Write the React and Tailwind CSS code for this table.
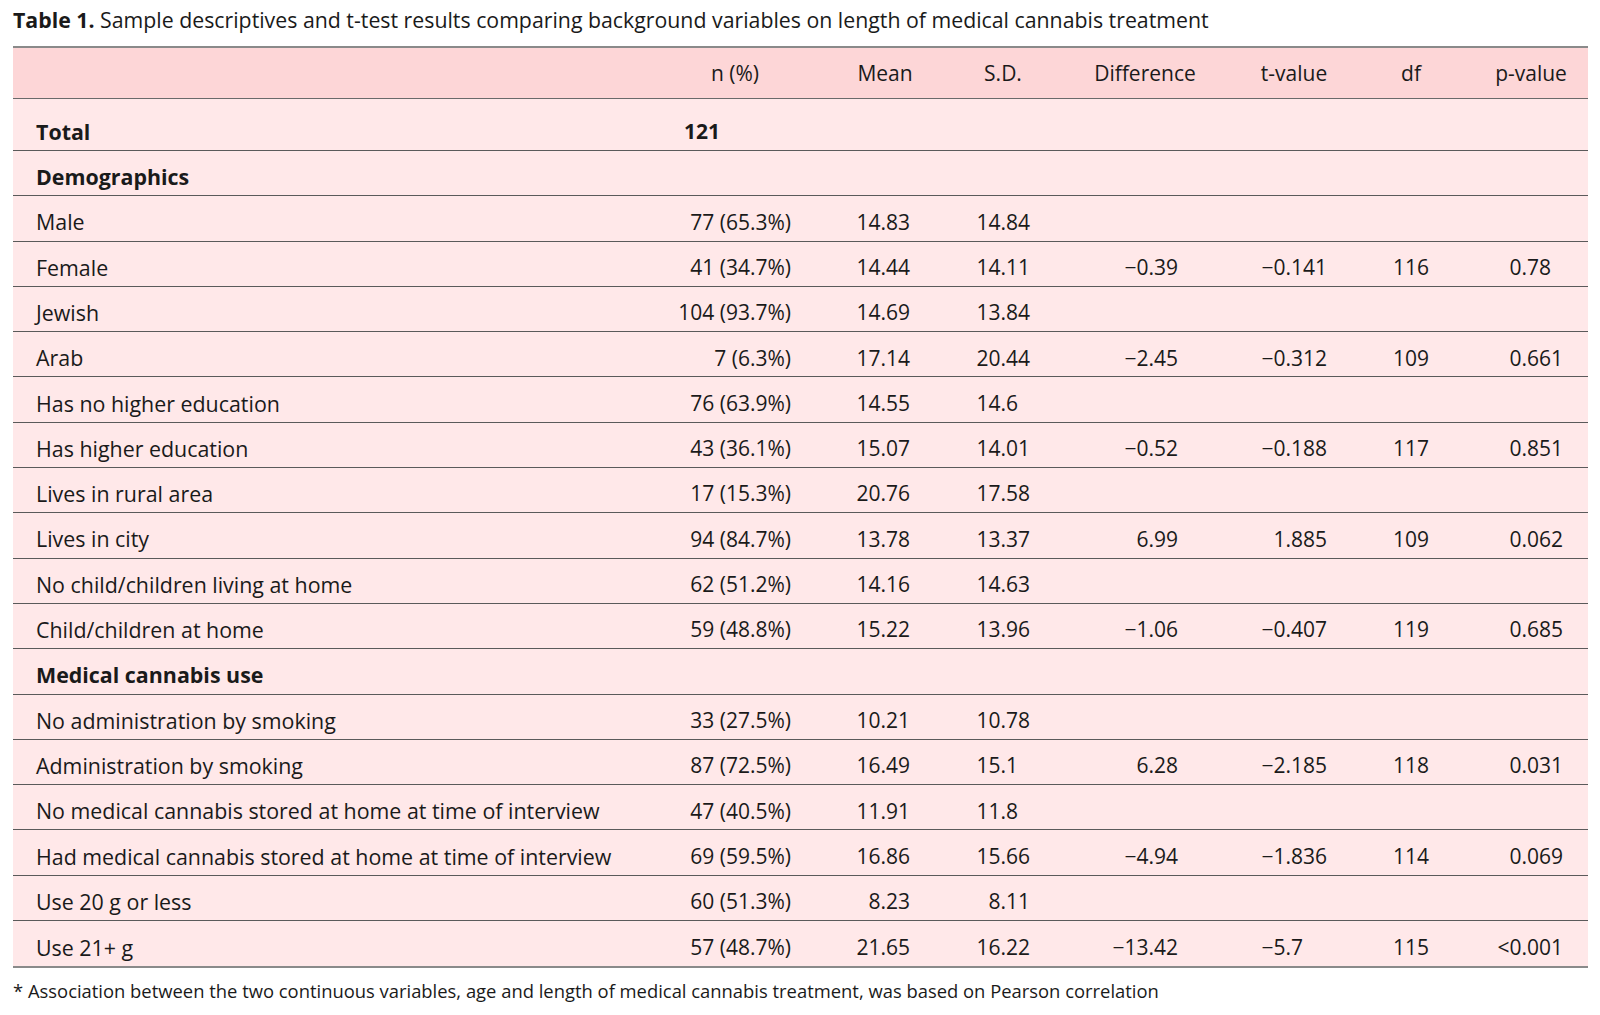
const rows = [
  { section: "Demographics" },
  { label: "Male", n: "77 (65.3%)", mean: "14.83", sd: "14.84" },
  { label: "Female", n: "41 (34.7%)", mean: "14.44", sd: "14.11", diff: "−0.39", t: "−0.141", df: "116", p: "0.78" },
  { label: "Jewish", n: "104 (93.7%)", mean: "14.69", sd: "13.84" },
  { label: "Arab", n: "7 (6.3%)", mean: "17.14", sd: "20.44", diff: "−2.45", t: "−0.312", df: "109", p: "0.661" },
  { label: "Has no higher education", n: "76 (63.9%)", mean: "14.55", sd: "14.6" },
  { label: "Has higher education", n: "43 (36.1%)", mean: "15.07", sd: "14.01", diff: "−0.52", t: "−0.188", df: "117", p: "0.851" },
  { label: "Lives in rural area", n: "17 (15.3%)", mean: "20.76", sd: "17.58" },
  { label: "Lives in city", n: "94 (84.7%)", mean: "13.78", sd: "13.37", diff: "6.99", t: "1.885", df: "109", p: "0.062" },
  { label: "No child/children living at home", n: "62 (51.2%)", mean: "14.16", sd: "14.63" },
  { label: "Child/children at home", n: "59 (48.8%)", mean: "15.22", sd: "13.96", diff: "−1.06", t: "−0.407", df: "119", p: "0.685" },
  { section: "Medical cannabis use" },
  { label: "No administration by smoking", n: "33 (27.5%)", mean: "10.21", sd: "10.78" },
  { label: "Administration by smoking", n: "87 (72.5%)", mean: "16.49", sd: "15.1", diff: "6.28", t: "−2.185", df: "118", p: "0.031" },
  { label: "No medical cannabis stored at home at time of interview", n: "47 (40.5%)", mean: "11.91", sd: "11.8" },
  { label: "Had medical cannabis stored at home at time of interview", n: "69 (59.5%)", mean: "16.86", sd: "15.66", diff: "−4.94", t: "−1.836", df: "114", p: "0.069" },
  { label: "Use 20 g or less", n: "60 (51.3%)", mean: "8.23", sd: "8.11" },
  { label: "Use 21+ g", n: "57 (48.7%)", mean: "21.65", sd: "16.22", diff: "−13.42", t: "−5.7", df: "115", p: "<0.001" },
];

const cols = "grid grid-cols-[627px_190px_110px_126px_158px_140px_94px_130px] items-center";

// right-aligned number, padded with invisible zeros so decimal points line up
const Dec = ({ v, places }) => {
  if (!v) return null;
  const have = v.includes(".") ? v.split(".")[1].length : 0;
  const pad = "0".repeat(Math.max(0, places - have));
  return (
    <span>
      {v}
      {pad && <span className="invisible">{pad}</span>}
    </span>
  );
};

const App = () => {
  return (
    <div className="w-[1600px] h-[1015px] bg-white pl-[13px] pt-[8px] text-[#1a1a1a] font-['Open_Sans','Noto_Sans',sans-serif] tabular-nums">
      <div className="text-[21.3px] leading-[24px] whitespace-nowrap">
        <span className="font-bold">Table 1.</span> Sample descriptives and t-test results comparing background variables on length of medical cannabis treatment
      </div>

      <div className="mt-[14px] w-[1575px] border-t-2 border-b-2 border-[#8a8a8a] text-[21px]">
        {/* header */}
        <div className={`${cols} h-[51px] pt-[2px] bg-[#fdd6d7] border-b border-[#6a6a6a]`}>
          <div></div>
          <div className="text-center">n (%)</div>
          <div className="text-center">Mean</div>
          <div className="text-center">S.D.</div>
          <div className="text-center">Difference</div>
          <div className="text-center">t-value</div>
          <div className="text-center">df</div>
          <div className="text-center pl-[16px]">p-value</div>
        </div>

        {/* total */}
        <div className={`${cols} h-[52px] pt-[15px] bg-[#ffe8e9] border-b border-[#5a5a5a] font-bold`}>
          <div className="pl-[23px] text-[21.4px]">Total</div>
          <div className="pl-[44px]">121</div>
        </div>

        {rows.map((r, i) =>
          r.section ? (
            <div key={i} className={`${cols} h-[45.3px] pt-[8px] bg-[#ffe8e9] border-b border-[#5a5a5a] font-bold`}>
              <div className="pl-[23px] text-[21.4px]">{r.section}</div>
            </div>
          ) : (
            <div
              key={i}
              className={`${cols} h-[45.3px] pt-[8px] bg-[#ffe8e9] ${i === rows.length - 1 ? "" : "border-b border-[#5a5a5a]"}`}
            >
              <div className="pl-[23px] text-[21.4px] whitespace-nowrap">{r.label}</div>
              <div className="text-right pr-[39px] whitespace-nowrap">{r.n}</div>
              <div className="text-right pr-[30px]"><Dec v={r.mean} places={2} /></div>
              <div className="text-right pr-[36px]"><Dec v={r.sd} places={2} /></div>
              <div className="text-right pr-[46px]"><Dec v={r.diff} places={2} /></div>
              <div className="text-right pr-[37px]"><Dec v={r.t} places={3} /></div>
              <div className="text-center">{r.df}</div>
              <div className="text-right pr-[25px]"><Dec v={r.p} places={3} /></div>
            </div>
          )
        )}
      </div>

      <div className="mt-[11px] text-[18.4px] leading-[24px] whitespace-nowrap">
        * Association between the two continuous variables, age and length of medical cannabis treatment, was based on Pearson correlation
      </div>
    </div>
  );
};

export default App;
